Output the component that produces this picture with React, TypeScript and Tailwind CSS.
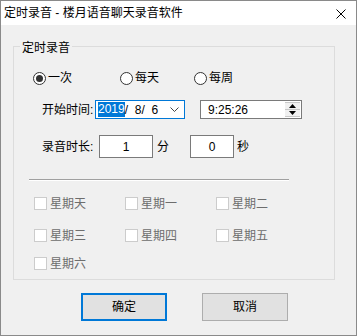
import { useState } from 'react';

const font = "font-['Liberation_Sans','Noto_Sans_CJK_SC',sans-serif]";

function Radio({ checked, label, className }: { checked?: boolean; label: string; className?: string }) {
  return (
    <label className={`flex items-center gap-[2px] ${className ?? ''}`}>
      <span className="flex h-[13px] w-[13px] items-center justify-center rounded-full border border-[#333333] bg-white">
        {checked && <span className="h-[7px] w-[7px] rounded-full bg-[#333333]" />}
      </span>
      <span>{label}</span>
    </label>
  );
}

function DayBox({ label }: { label: string }) {
  return (
    <div className="flex w-[91px] items-center gap-[3px]">
      <span className="h-[13px] w-[13px] border border-[#cccccc] bg-white" />
      <span className="text-[#6d6d6d]">{label}</span>
    </div>
  );
}

export default function App() {
  const [mode, setMode] = useState('once');

  return (
    <div className={`${font} flex h-[336px] w-[357px] flex-col border border-[#8a8a8a] bg-[#f0f0f0] text-[12px] leading-4 text-black`}>
      {/* title bar */}
      <div className="flex h-[24px] items-center justify-between bg-white pl-[3px] pr-[10px]">
        <span>定时录音 - 楼月语音聊天录音软件</span>
        <svg width="10" height="10" viewBox="0 0 10 10" className="mt-[1px]">
          <path d="M0.5 0.5 L9.5 9.5 M9.5 0.5 L0.5 9.5" stroke="#000" strokeWidth="1" />
        </svg>
      </div>

      <fieldset className="ml-[12px] mt-[11px] h-[244px] w-[322px] border border-[#dcdcdc]">
        <legend className="ml-[6px] px-[2px] pt-[4px] leading-4">定时录音</legend>

        {/* schedule type */}
        <div className="mt-[14px] flex h-4 items-center pl-[19px]" onClick={() => setMode(mode)}>
          <Radio checked={mode === 'once'} label="一次" className="w-[87px]" />
          <Radio label="每天" className="w-[74px]" />
          <Radio label="每周" />
        </div>

        {/* start time */}
        <div className="mt-[14px] flex h-[19px] items-center pl-[28px]">
          <span className="w-[53px]">开始时间:</span>
          <div className="flex h-[19px] w-[90px] items-center border border-[#0078d7] bg-white pl-[2px]">
            <span className="bg-[#0078d7] leading-[15px] text-white">2019</span>
            <span className="whitespace-pre">/  8/  6</span>
            <svg width="9" height="5" viewBox="0 0 9 5" className="ml-auto mr-[5px]">
              <path d="M0.5 0.5 L4.5 4.5 L8.5 0.5" stroke="#444" fill="none" strokeWidth="1" />
            </svg>
          </div>
          <div className="ml-[15px] flex h-[19px] w-[102px] items-center border border-[#7a7a7a] bg-white pl-[7px]">
            <span>9:25:26</span>
            <div className="ml-auto mr-[1px] flex h-[15px] w-[15px] flex-col border-y border-[#c8c8c8] bg-[#f0f0f0]">
              <div className="flex flex-1 items-center justify-center border-b border-[#c8c8c8]">
                <svg width="7" height="4" viewBox="0 0 7 4">
                  <path d="M0 4 L3.5 0 L7 4 Z" fill="#000" />
                </svg>
              </div>
              <div className="flex flex-1 items-center justify-center">
                <svg width="7" height="4" viewBox="0 0 7 4">
                  <path d="M0 0 L3.5 4 L7 0 Z" fill="#000" />
                </svg>
              </div>
            </div>
          </div>
        </div>

        {/* duration */}
        <div className="mt-[16px] flex h-[23px] items-center pl-[28px]">
          <span className="w-[57px]">录音时长:</span>
          <div className="flex h-[23px] w-[54px] items-center justify-center border border-[#7a7a7a] bg-white">1</div>
          <span className="ml-[4px]">分</span>
          <div className="ml-[21px] flex h-[23px] w-[44px] items-center justify-center border border-[#7a7a7a] bg-white">0</div>
          <span className="ml-[3px]">秒</span>
        </div>

        <div className="ml-[15px] mt-[21px] w-[260px] border-b border-t border-b-white border-t-[#a0a0a0]" />

        {/* weekdays */}
        <div className="mt-[16px] flex h-[13px] items-center pl-[20px]">
          <DayBox label="星期天" />
          <DayBox label="星期一" />
          <DayBox label="星期二" />
        </div>
        <div className="mt-[19px] flex h-[13px] items-center pl-[20px]">
          <DayBox label="星期三" />
          <DayBox label="星期四" />
          <DayBox label="星期五" />
        </div>
        <div className="mt-[15px] flex h-[13px] items-center pl-[20px]">
          <DayBox label="星期六" />
        </div>
      </fieldset>

      {/* buttons */}
      <div className="mt-[13px] flex gap-[35px] pl-[80px]">
        <button className="h-[28px] w-[86px] border-2 border-[#0078d7] bg-[#e1e1e1]">确定</button>
        <button className="h-[28px] w-[86px] border border-[#adadad] bg-[#e1e1e1]">取消</button>
      </div>
    </div>
  );
}
